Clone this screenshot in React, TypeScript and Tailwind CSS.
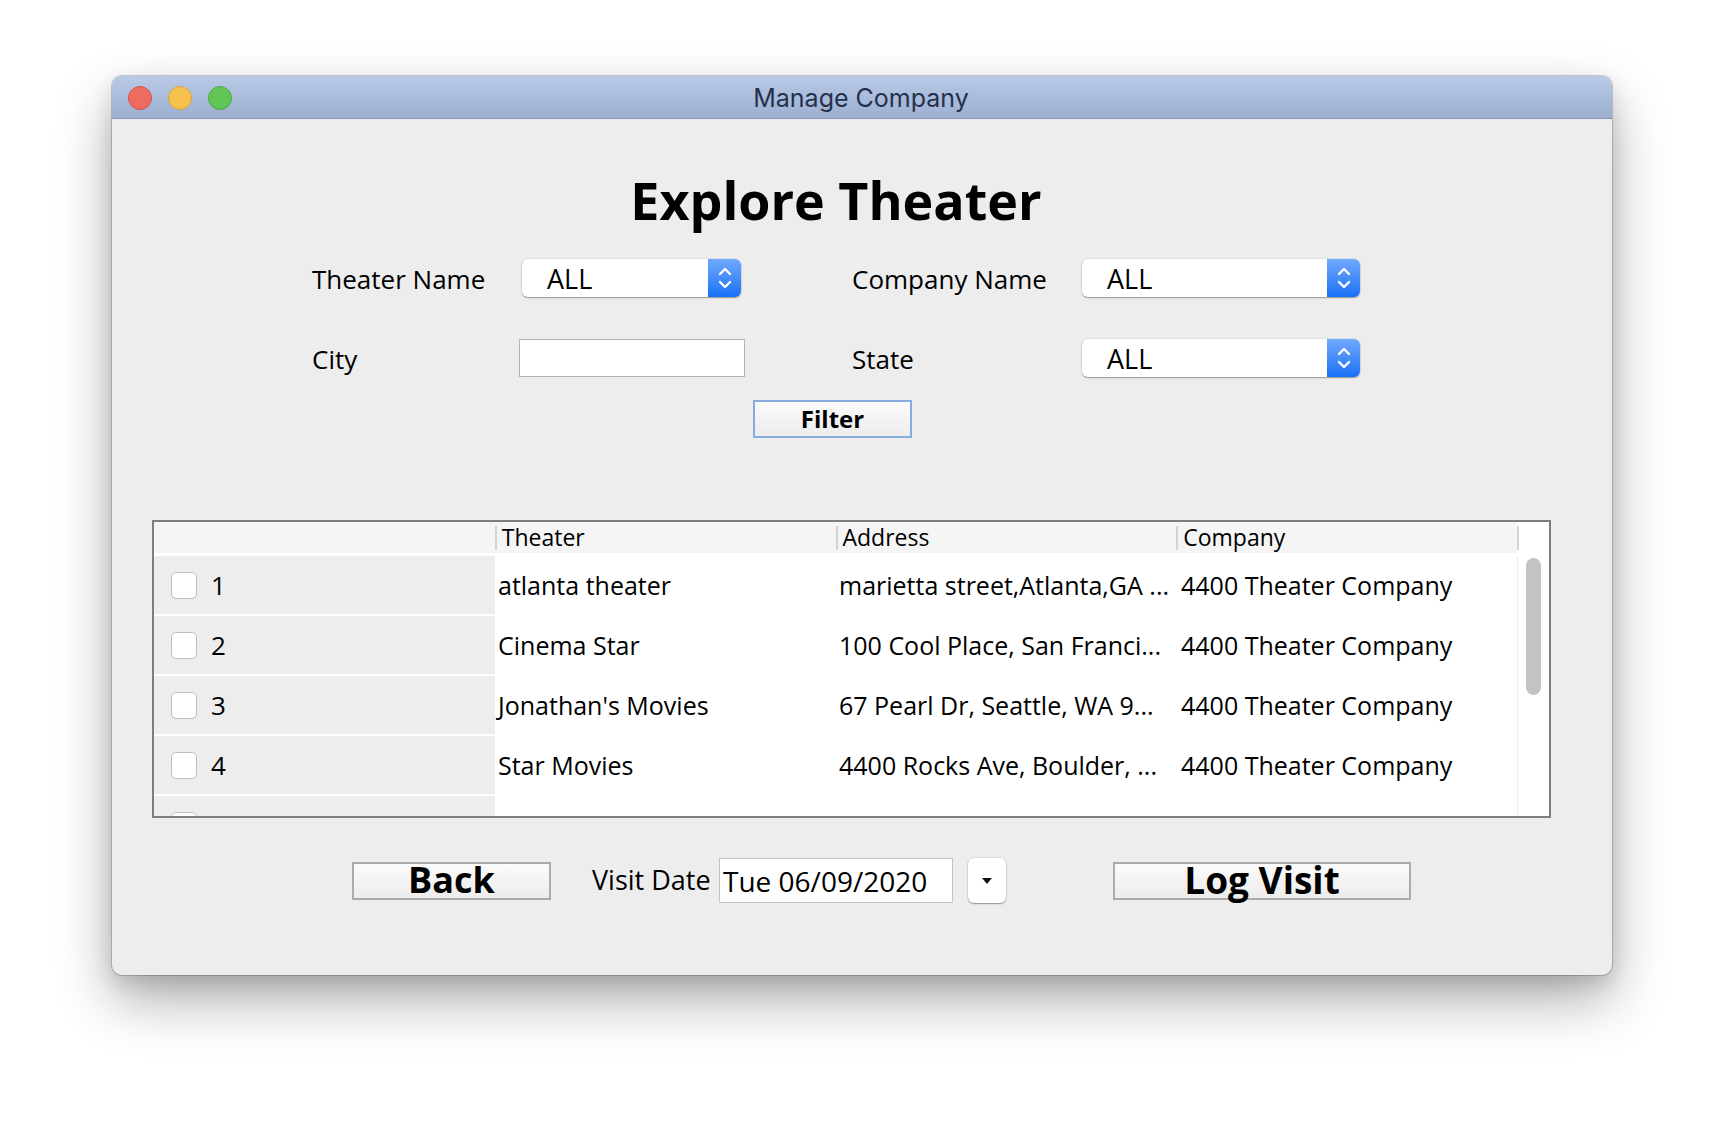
import React from 'react'

const rows = [
  { n: 1, theater: 'atlanta theater', address: 'marietta street,Atlanta,GA ...', company: '4400 Theater Company' },
  { n: 2, theater: 'Cinema Star', address: '100 Cool Place, San Franci...', company: '4400 Theater Company' },
  { n: 3, theater: "Jonathan's Movies", address: '67 Pearl Dr, Seattle, WA 9...', company: '4400 Theater Company' },
  { n: 4, theater: 'Star Movies', address: '4400 Rocks Ave, Boulder, ...', company: '4400 Theater Company' },
]

function Combo({ width }: { width: string }) {
  return (
    <div className={`${width} h-[38px] flex rounded-[6px] bg-white shadow-[0_1px_1.5px_rgba(0,0,0,0.35),0_0_0_0.5px_rgba(0,0,0,0.08)] overflow-hidden`}>
      <div className="flex-1 pl-[25px] flex items-center text-[27px] leading-none">ALL</div>
      <div className="w-[33px] bg-gradient-to-b from-[#6ea8fb] to-[#1570f7] flex items-center justify-center">
        <svg width="16" height="26" viewBox="0 0 16 26" fill="none" stroke="white" strokeWidth="2.4" strokeLinecap="round" strokeLinejoin="round">
          <polyline points="3,9 8,4 13,9" />
          <polyline points="3,17 8,22 13,17" />
        </svg>
      </div>
    </div>
  )
}

export default function App() {
  return (
    <div className="w-full h-[1124px] bg-white pt-[76px] pl-[112px] font-['Open_Sans',sans-serif] text-black">
      <div className="w-[1500px] h-[899px] rounded-[10px] bg-[#ededed] overflow-hidden shadow-[0_0_0_1px_rgba(0,0,0,0.18),0_25px_55px_rgba(0,0,0,0.32),0_8px_20px_rgba(0,0,0,0.12)]">
        {/* title bar */}
        <div className="relative h-[43px] bg-gradient-to-b from-[#b9cae8] to-[#9dafd0] border-b border-[#8595b6] flex items-center justify-center">
          <div className="absolute left-[16px] top-[10px] flex gap-[16px]">
            <div className="w-[24px] h-[24px] rounded-full bg-[#ee6b60] border border-[#d4534a]" />
            <div className="w-[24px] h-[24px] rounded-full bg-[#f6c04f] border border-[#d9a23c]" />
            <div className="w-[24px] h-[24px] rounded-full bg-[#62c655] border border-[#4fa840]" />
          </div>
          <span className="font-['Inter',sans-serif] text-[25px] text-[#25314c] ml-[-2px] mt-[4px]">Manage Company</span>
        </div>

        {/* content */}
        <div className="flex flex-col">
          <h1 className="mt-[54px] h-[54px] pr-[52px] text-center text-[52px] leading-[54px] font-bold">Explore Theater</h1>

          <div className="mt-[32px] h-[38px] flex items-center ml-[200px] text-[26px]">
            <div className="w-[210px] mt-[3px]">Theater Name</div>
            <Combo width="w-[219px]" />
            <div className="w-[111px]" />
            <div className="w-[230px] mt-[3px]">Company Name</div>
            <Combo width="w-[278px]" />
          </div>

          <div className="mt-[42px] h-[38px] flex items-center ml-[200px] text-[26px]">
            <div className="w-[207px] mt-[3px]">City</div>
            <div className="w-[226px] h-[38px] bg-white border border-[#b4b4b4]" />
            <div className="w-[107px]" />
            <div className="w-[230px] mt-[3px]">State</div>
            <Combo width="w-[278px]" />
          </div>

          <div className="mt-[23px] flex ml-[641px]">
            <button className="w-[159px] h-[38px] border-2 border-[#86acdf] bg-gradient-to-b from-[#fbfbfb] to-[#ececec] text-[24px] font-bold leading-none">
              Filter
            </button>
          </div>

          {/* table */}
          <div className="mt-[82px] ml-[40px] w-[1399px] h-[298px] border-2 border-[#7e7e7e] bg-white flex flex-col overflow-hidden">
            <div className="h-[31px] flex shrink-0">
              <div className="w-[1363px] bg-[#f5f5f5] flex text-[23px] leading-none">
                <div className="w-[341px]" />
                {['Theater', 'Address', 'Company'].map((h) => (
                  <div key={h} className="w-[341px] flex items-center">
                    <div className="w-[2px] h-[24px] bg-[#d4d4d4]" />
                    <span className="ml-[5px] mt-[-1px]">{h}</span>
                  </div>
                ))}
              </div>
              <div className="w-[2px] h-[24px] mt-[4px] bg-[#d4d4d4]" />
            </div>
            <div className="h-[3px] shrink-0" />
            <div className="flex flex-1 min-h-0">
              <div className="w-[1363px] flex flex-col overflow-hidden">
                {rows.map((r) => (
                  <div key={r.n} className="h-[60px] shrink-0 flex text-[25px] leading-none">
                    <div className="w-[341px] h-[58px] bg-[#ededed] flex items-center">
                      <div className="ml-[17px] w-[26px] h-[27px] rounded-[5px] bg-white border border-[#bdbdbd]" />
                      <span className="ml-[14px] text-[26px]">{r.n}</span>
                    </div>
                    <div className="w-[341px] h-[58px] flex items-center pl-[3px] whitespace-nowrap">{r.theater}</div>
                    <div className="w-[341px] h-[58px] flex items-center pl-[3px] whitespace-nowrap">{r.address}</div>
                    <div className="w-[340px] h-[58px] flex items-center pl-[4px] whitespace-nowrap">{r.company}</div>
                  </div>
                ))}
                <div className="h-[60px] shrink-0 flex">
                  <div className="w-[341px] h-[58px] bg-[#ededed] flex items-start">
                    <div className="ml-[17px] mt-[16px] w-[26px] h-[27px] rounded-[5px] bg-white border border-[#bdbdbd]" />
                  </div>
                </div>
              </div>
              <div className="w-[32px] border-l border-[#ececec] flex justify-center pt-[2px]">
                <div className="w-[15px] h-[137px] rounded-full bg-[#c3c3c3]" />
              </div>
            </div>
          </div>

          {/* bottom controls */}
          <div className="mt-[40px] h-[45px] flex items-center ml-[240px]">
            <button className="w-[199px] h-[38px] border-2 border-[#ababab] bg-gradient-to-b from-[#fbfbfb] to-[#ececec] text-[36px] font-bold leading-none">
              <span className="relative top-[-2px]">Back</span>
            </button>
            <div className="ml-[41px] w-[125px] text-[27px] whitespace-nowrap">Visit Date</div>
            <div className="ml-[2px] w-[234px] h-[45px] bg-white border border-[#c4c4c4] flex items-center pl-[3px] text-[28px] leading-none">
              Tue 06/09/2020
            </div>
            <div className="ml-[15px] w-[38px] h-[45px] bg-white rounded-[6px] shadow-[0_1px_1.5px_rgba(0,0,0,0.35),0_0_0_0.5px_rgba(0,0,0,0.1)] flex items-center justify-center">
              <svg width="12" height="8" viewBox="0 0 12 8">
                <polygon points="1,1 11,1 6,7" fill="#111" />
              </svg>
            </div>
            <button className="ml-[107px] w-[298px] h-[38px] border-2 border-[#ababab] bg-gradient-to-b from-[#fbfbfb] to-[#ececec] text-[37px] font-bold leading-none">
              <span className="relative top-[-3px]">Log Visit</span>
            </button>
          </div>
        </div>
      </div>
    </div>
  )
}
